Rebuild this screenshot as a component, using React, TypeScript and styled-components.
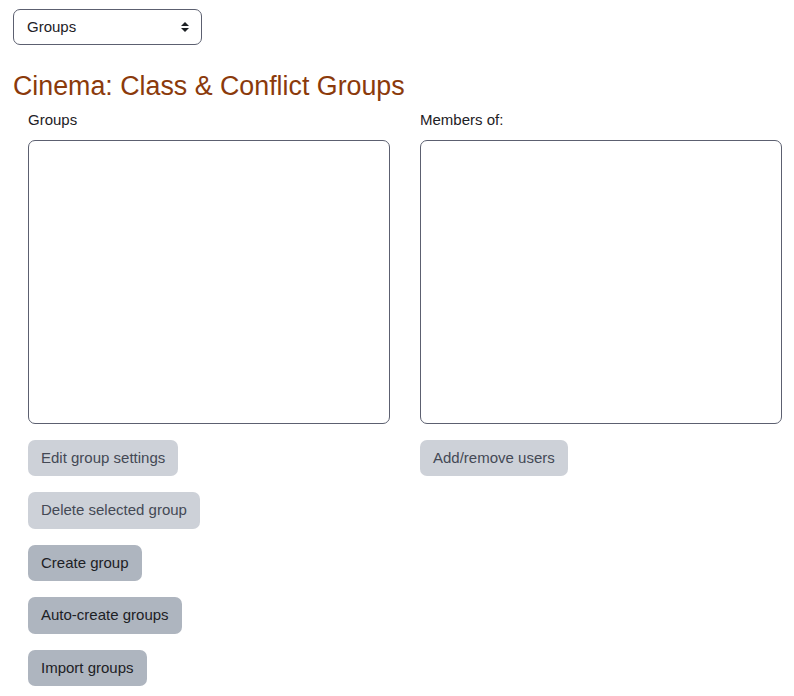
import React from 'react';
import styled, { createGlobalStyle } from 'styled-components';

const GlobalStyle = createGlobalStyle`
  html, body {
    margin: 0;
    padding: 0;
    background: #fff;
  }

  body {
    font-family: "Liberation Sans", Arial, sans-serif;
    font-size: 15px;
    line-height: 1.5;
    color: #1d2125;
  }
`;

const Page = styled.div`
  padding: 9px 13px 0 13px;
`;

const SelectWrap = styled.div`
  position: relative;
  width: 189px;
`;

const Select = styled.select`
  appearance: none;
  display: block;
  width: 100%;
  height: 36px;
  padding: 5px 28px 6px 13px;
  border: 1px solid #5c6070;
  border-radius: 7px;
  background: #fff;
  font-family: inherit;
  font-size: 15px;
  line-height: 22px;
  color: #1d2125;
`;

const SelectArrow = styled.svg`
  position: absolute;
  right: 13px;
  top: 13px;
  pointer-events: none;
`;

const Title = styled.h2`
  margin: 25px 0 0 0;
  font-size: 26.8px;
  font-weight: 400;
  line-height: 1.2;
  color: #8b3a0b;
`;

const Columns = styled.div`
  display: grid;
  grid-template-columns: 362px 362px;
  column-gap: 30px;
  padding: 7px 0 0 15px;
`;

const Column = styled.div`
  display: flex;
  flex-direction: column;
  align-items: flex-start;
`;

const Label = styled.label`
  display: block;
  margin-bottom: 8px;
  font-size: 15px;
  line-height: 22.5px;
`;

const ListBox = styled.select`
  appearance: none;
  display: block;
  width: 362px;
  height: 284px;
  margin-bottom: 16px;
  border: 1px solid #5c6070;
  border-radius: 7px;
  background: #fff;
  box-sizing: border-box;
`;

const Button = styled.button<{ $disabled?: boolean }>`
  display: inline-block;
  margin-bottom: 16px;
  padding: 6px 12px;
  border: 1px solid transparent;
  border-radius: 7px;
  font-family: inherit;
  font-size: 15px;
  line-height: 22.5px;
  background: ${({ $disabled }) => ($disabled ? '#cdd1d8' : '#aeb5bf')};
  color: ${({ $disabled }) => ($disabled ? '#444955' : '#1d2125')};
  cursor: ${({ $disabled }) => ($disabled ? 'default' : 'pointer')};
`;

const App = () => (
  <>
    <GlobalStyle />
    <Page>
      <SelectWrap>
        <Select defaultValue="groups">
          <option value="groups">Groups</option>
          <option value="groupings">Groupings</option>
          <option value="overview">Overview</option>
        </Select>
        <SelectArrow width="8" height="10" viewBox="0 0 4 5">
          <path d="M2 0L0 2h4zm0 5L0 3h4z" fill="#1d2125" />
        </SelectArrow>
      </SelectWrap>

      <Title>Cinema: Class &amp; Conflict Groups</Title>

      <Columns>
        <Column>
          <Label>Groups</Label>
          <ListBox multiple />
          <Button $disabled>Edit group settings</Button>
          <Button $disabled>Delete selected group</Button>
          <Button>Create group</Button>
          <Button>Auto-create groups</Button>
          <Button>Import groups</Button>
        </Column>
        <Column>
          <Label>Members of:</Label>
          <ListBox multiple />
          <Button $disabled>Add/remove users</Button>
        </Column>
      </Columns>
    </Page>
  </>
);

export default App;
